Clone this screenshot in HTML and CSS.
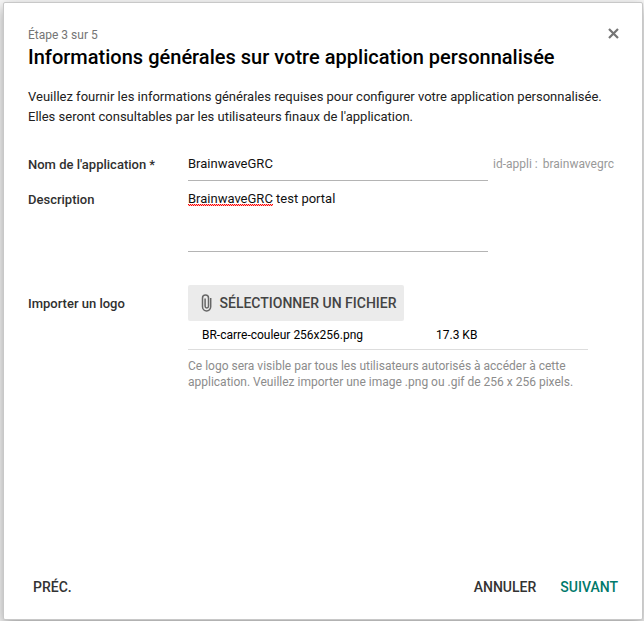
FILE: index.html
```html
<!DOCTYPE html>
<html lang="fr">
<head>
<meta charset="utf-8">
<title>Application personnalisée</title>
<link rel="stylesheet" href="styles.css">
</head>
<body>
<main class="dialog">
  <header class="header">
    <div>
      <p class="step">Étape 3 sur 5</p>
      <h1 class="title">Informations générales sur votre application personnalisée</h1>
    </div>
    <svg class="close" viewBox="0 0 11 11" aria-label="Fermer"><path d="M1 1 10 10M10 1 1 10"/></svg>
  </header>
  <p class="intro">Veuillez fournir les informations générales requises pour configurer votre application personnalisée.<br>Elles seront consultables par les utilisateurs finaux de l'application.</p>
  <section class="form">
    <div class="row row-name">
      <div class="label">Nom de l'application *</div>
      <div class="field">BrainwaveGRC</div>
      <div class="app-id"><span>id-appli :</span><span>brainwavegrc</span></div>
    </div>
    <div class="row row-description">
      <div class="label">Description</div>
      <div class="field"><span class="misspelled">BrainwaveGRC</span> test portal</div>
    </div>
    <div class="row row-logo">
      <div class="label">Importer un logo</div>
      <div class="upload">
        <div class="select-file">
          <svg class="clip" viewBox="0 0 11 18"><path d="M9.7 4v8.8a4.1 4.1 0 0 1-8.2 0V3.9a3 3 0 0 1 6 0v8.4a1.7 1.7 0 0 1-3.4 0V4.5"/></svg>
          <span>SÉLECTIONNER UN FICHIER</span>
        </div>
        <div class="file"><span class="file-name">BR-carre-couleur 256x256.png</span><span>17.3 KB</span></div>
        <p class="hint">Ce logo sera visible par tous les utilisateurs autorisés à accéder à cette<br>application. Veuillez importer une image .png ou .gif de 256 x 256 pixels.</p>
      </div>
    </div>
  </section>
  <footer class="footer">
    <span class="action prev">PRÉC.</span>
    <span class="action cancel">ANNULER</span>
    <span class="action next">SUIVANT</span>
  </footer>
</main>
</body>
</html>
```
FILE: styles.css
```css
* { box-sizing: border-box; }
body {
  margin: 0;
  height: 621px;
  padding: 2px 2px 2px 3px;
  overflow: hidden;
  background: #f8f8f8;
  font: 13px/20px Roboto, sans-serif;
  color: #212121;
}
p, h1 { margin: 0; }
.dialog {
  display: flex;
  flex-direction: column;
  width: 640px;
  height: 618px;
  padding: 24px 23px 22px 24px;
  border: 1px solid #c8c8c8;
  border-radius: 2px;
  background: #fff;
  box-shadow: 0 5px 14px rgba(0, 0, 0, .38);
}
.header { display: flex; justify-content: space-between; }
.step { font-size: 12px; line-height: 16px; color: #757575; }
.title { font-size: 20px; line-height: 28px; font-weight: 500; letter-spacing: .014px; color: #000; white-space: nowrap; }
.close { width: 11px; height: 11px; margin-top: 1px; margin-right: .5px; fill: none; stroke: #757575; stroke-width: 2.2; }
.intro { margin-top: 16px; white-space: nowrap; }
.row { display: flex; }
.label { width: 160px; font-weight: 500; color: #303030; }
.field { width: 300px; border-bottom: 1px solid #b4b4b4; color: #111; }
.row-name { margin-top: 27px; height: 27px; }
.row-name .label { padding-top: 1px; }
.app-id { display: flex; gap: 5px; margin-left: 5px; font-size: 12px; color: #999; white-space: nowrap; }
.row-description { margin-top: 8px; height: 63px; }
.row-description .label { padding-top: 1px; }
.misspelled {
  display: inline-block;
  background:
    linear-gradient(90deg, #f00 1px, #fbb 1px) 0 15px / 2px 1px repeat-x,
    linear-gradient(90deg, #fbb 1px, #f00 1px) 0 16px / 2px 1px repeat-x;
}
.row-logo { margin-top: 33px; }
.row-logo .label { padding-top: 9px; }
.upload { width: 400px; }
.select-file {
  display: flex;
  align-items: center;
  width: 216px;
  height: 36px;
  padding-left: 13px;
  border-radius: 2px;
  background: #ebebeb;
  color: #444;
  font-size: 14px;
  font-weight: 500;
  white-space: nowrap;
}
.clip { width: 11px; height: 18px; margin-right: 7.5px; fill: none; stroke: #666; stroke-width: 1.5; }
.file {
  display: flex;
  height: 29px;
  padding: 4px 0 0 14px;
  border-bottom: 1px solid #ddd;
  color: #000;
  font-size: 12px;
}
.file-name { width: 234px; }
.hint { margin-top: 8px; color: #8c8c8c; font-size: 12px; line-height: 16px; white-space: nowrap; }
.footer { display: flex; margin-top: auto; padding: 0 1px 0 5px; }
.action { font-size: 14px; line-height: 20px; font-weight: 500; color: #333; }
.cancel { margin-left: auto; }
.next { margin-left: 24px; color: #00796b; }
```
